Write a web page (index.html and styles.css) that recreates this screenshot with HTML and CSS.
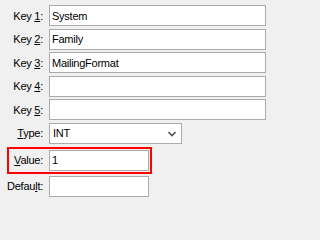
FILE: index.html
```html
<!DOCTYPE html>
<html>
<head>
<meta charset="utf-8">
<link rel="stylesheet" href="styles.css">
</head>
<body>
<div class="form">
  <div class="row"><label class="lbl">Key <u>1</u>:</label><input class="field wide" value="System"></div>
  <div class="row"><label class="lbl">Key <u>2</u>:</label><input class="field wide" value="Family"></div>
  <div class="row"><label class="lbl">Key <u>3</u>:</label><input class="field wide" value="MailingFormat"></div>
  <div class="row"><label class="lbl">Key <u>4</u>:</label><input class="field wide" value=""></div>
  <div class="row"><label class="lbl">Key <u>5</u>:</label><input class="field wide" value=""></div>
  <div class="row"><label class="lbl"><u>T</u>ype:</label>
    <div class="combo"><span>INT</span>
      <svg class="chev" width="8" height="6" viewBox="0 0 8 6"><path d="M0.5 1 L4 4.5 L7.5 1" fill="none" stroke="#555" stroke-width="1.6"/></svg>
    </div>
  </div>
  <div class="row highlight"><label class="lbl"><u>V</u>alue:</label><input class="field narrow" value="1"></div>
  <div class="row last"><label class="lbl">Defau<u>l</u>t:</label><input class="field narrow" value=""></div>
</div>
</body>
</html>
```

FILE: styles.css
```css
html, body {
  margin: 0;
  padding: 0;
  background: #f0f0f0;
}
body {
  font-family: "Liberation Sans", Arial, sans-serif;
  font-size: 11px;
  letter-spacing: -0.25px;
  color: #000;
}
.form {
  display: flex;
  flex-direction: column;
  gap: 2.5px;
  padding-top: 5px;
}
.row {
  display: flex;
  align-items: center;
  gap: 6px;
  height: 21px;
}
.lbl {
  width: 43px;
  text-align: right;
  flex: none;
  white-space: nowrap;
}
.lbl u {
  text-underline-offset: 1px;
}
.field {
  box-sizing: border-box;
  height: 21px;
  margin: 0;
  padding: 0 2px;
  border: 1px solid #ababab;
  background: #fff;
  font: inherit;
  letter-spacing: inherit;
  color: #000;
  outline: none;
}
.wide { width: 217px; }
.narrow { width: 100px; }
.combo {
  box-sizing: border-box;
  width: 133px;
  height: 21px;
  border: 1px solid #ababab;
  background: #fff;
  display: flex;
  align-items: center;
  justify-content: space-between;
  padding: 0 5px 0 3px;
}
.chev { display: block; margin-top: 1px; }
.highlight {
  box-sizing: border-box;
  height: 27px;
  margin-left: 7px;
  margin-top: 0.5px;
  width: 145px;
  border: 2px solid #ff0000;
  padding: 1px 1px 1px 0;
}
.highlight .lbl { width: 34px; }
.last { margin-top: -0.5px; }
```
